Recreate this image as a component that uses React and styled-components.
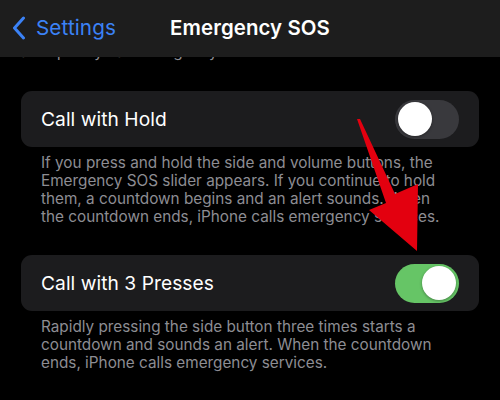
import React from "react";
import styled, { createGlobalStyle } from "styled-components";

const Global = createGlobalStyle`
  html, body { margin: 0; padding: 0; background: #000; }
  body { width: 500px; height: 400px; overflow: hidden; font-family: Inter, "Noto Sans", sans-serif; -webkit-font-smoothing: antialiased; }
`;

const Page = styled.div`
  position: relative;
  width: 500px;
  height: 400px;
  background: #000;
  overflow: hidden;
`;

const NavBar = styled.div`
  height: 57px;
  background: #1d1d1d;
  display: grid;
  grid-template-columns: 1fr auto 1fr;
  align-items: center;
  padding-bottom: 2px;
  box-sizing: border-box;
`;

const Back = styled.div`
  display: flex;
  align-items: center;
  gap: 10px;
  padding-left: 12px;
  color: #3b82f6;
  font-size: 20.7px;
  letter-spacing: 0.1px;
`;

const Title = styled.div`
  color: #fff;
  font-size: 20.4px;
  font-weight: 600;
  letter-spacing: 0.1px;
`;

const Section = styled.div`
  padding: 0 21px;
  margin-top: ${p => p.$top}px;
`;

const ClipLine = styled.div`
  height: 4px;
  overflow: hidden;
  padding-left: 20px;
  color: #8d8d93;
  font-size: 15.3px;
  line-height: 18px;
  white-space: nowrap;
  & > span { display: block; margin-top: -14px; }
`;

const Card = styled.div`
  height: 56px;
  background: #1c1c1e;
  border-radius: 11px;
  display: flex;
  align-items: center;
  justify-content: space-between;
  padding: 0 20px;
`;

const Label = styled.div`
  color: #fff;
  font-size: 19.2px;
  letter-spacing: 0.05px;
`;

const Toggle = styled.div`
  width: 64px;
  height: 39px;
  border-radius: 20px;
  background: ${p => (p.$on ? "#66c566" : "#39393d")};
  display: flex;
  align-items: center;
  justify-content: ${p => (p.$on ? "flex-end" : "flex-start")};
  padding: 0 3px;
  box-sizing: border-box;
`;

const Knob = styled.div`
  width: 34px;
  height: 34px;
  border-radius: 50%;
  background: #fff;
  box-shadow: 0 1px 3px rgba(0,0,0,0.35);
`;

const Footer = styled.div`
  padding: 7px 28px 0 20px;
  color: #8d8d93;
  font-size: 15.3px;
  line-height: 18px;
`;

const Arrow = styled.svg`
  position: absolute;
  left: 0;
  top: 0;
  pointer-events: none;
`;

export default function App() {
  return (
    <Page>
      <Global />
      <NavBar>
        <Back>
          <svg width="14" height="24" viewBox="0 0 14 24">
            <path d="M11.5 2 L2.5 12 L11.5 22" fill="none" stroke="#3b82f6" strokeWidth="3" strokeLinecap="round" strokeLinejoin="round" />
          </svg>
          <span>Settings</span>
        </Back>
        <Title>Emergency SOS</Title>
        <div />
      </NavBar>
      <ClipLine><span>and quickly call emergency services</span></ClipLine>
      <Section $top={30}>
        <Card>
          <Label>Call with Hold</Label>
          <Toggle><Knob /></Toggle>
        </Card>
        <Footer>
          If you press and hold the side and volume buttons, the Emergency SOS slider appears. If you continue to hold them, a countdown begins and an alert sounds. When the countdown ends, iPhone calls emergency services.
        </Footer>
      </Section>
      <Section $top={29}>
        <Card>
          <Label>Call with 3 Presses</Label>
          <Toggle $on><Knob /></Toggle>
        </Card>
        <Footer>
          Rapidly pressing the side button three times starts a countdown and sounds an alert. When the countdown ends, iPhone calls emergency services.
        </Footer>
      </Section>
      <Arrow width="500" height="400" viewBox="0 0 500 400">
        <polygon points="357,119 360,119 395,194 418,184 417,251 369,210 386,203" fill="#e3000f" />
      </Arrow>
    </Page>
  );
}
